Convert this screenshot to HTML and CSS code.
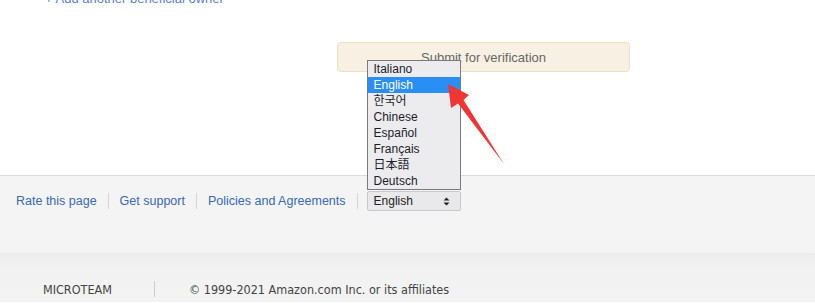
FILE: index.html
```html
<!DOCTYPE html>
<html>
  <head>
    <meta charset="utf-8">
    <title>Submit for verification</title>
    <link rel="stylesheet" href="styles.css">
  </head>
  <body>
    <main class="content">
      <a class="add-owner" href="#">+ Add another beneficial owner</a>
      <button class="submit" type="button">Submit for verification</button>
    </main>

    <footer class="footer">
      <nav class="footer-links">
        <a href="#">Rate this page</a>
        <span class="sep"></span>
        <a href="#">Get support</a>
        <span class="sep"></span>
        <a href="#">Policies and Agreements</a>
        <span class="sep"></span>
        <div class="lang">
          <div class="lang-select">
            <span>English</span>
            <svg class="updown" width="7" height="9" viewBox="0 0 7 9">
              <path d="M0.5 3.5 L3.5 0.5 L6.5 3.5 Z M0.5 5.5 L3.5 8.5 L6.5 5.5 Z" fill="#222"/>
            </svg>
          </div>
          <ul class="lang-list">
            <li>Italiano</li>
            <li class="active">English</li>
            <li>한국어</li>
            <li>Chinese</li>
            <li>Español</li>
            <li>Français</li>
            <li>日本語</li>
            <li>Deutsch</li>
          </ul>
        </div>
      </nav>
    </footer>

    <div class="legal">
      <span>MICROTEAM</span>
      <span class="sep"></span>
      <span class="copy">© 1999-2021 Amazon.com Inc. or its affiliates</span>
    </div>

    <svg class="arrow" width="815" height="303" viewBox="0 0 815 303">
      <polygon points="448,84 469,95 463.5,100 504,164 458,103.5 451,108" fill="#f03535"/>
    </svg>
  </body>
</html>
```

FILE: styles.css
```css
html, body {
  margin: 0;
  padding: 0;
}
body {
  width: 815px;
  height: 303px;
  overflow: hidden;
  position: relative;
  background: #fff;
  font-family: "Liberation Sans", Arial, sans-serif;
  color: #333;
}
.content {
  height: 175px;
  display: flex;
  flex-direction: column;
  align-items: flex-start;
}
.add-owner {
  margin: -9px 0 0 45px;
  font-size: 13px;
  line-height: 16px;
  color: #5b7fc6;
  text-decoration: none;
}
.submit {
  margin: 35px 0 0 337px;
  width: 293px;
  height: 30px;
  background: #f8f1e3;
  border: 1px solid #ebdfc7;
  border-radius: 4px;
  font-family: inherit;
  font-size: 13px;
  color: #666;
  padding: 0;
}
.footer {
  height: 77px;
  border-top: 1px solid #dcdcdc;
  background: #f4f4f4;
  box-shadow: 0 1px 2px rgba(0, 0, 0, 0.06);
}
.footer-links {
  display: flex;
  align-items: center;
  gap: 11px;
  padding: 15px 0 0 16px;
  font-size: 12.5px;
}
.footer-links a {
  color: #3868b6;
  text-decoration: none;
  margin-top: -1px;
}
.sep {
  width: 1px;
  height: 16px;
  background: #d6d6d6;
}
.lang {
  position: relative;
  margin-left: -2px;
}
.lang-select {
  width: 92px;
  height: 18px;
  box-sizing: content-box;
  border: 1px solid #c9c9c9;
  border-radius: 2px;
  background: #e9e9ec;
  display: flex;
  align-items: center;
  justify-content: space-between;
  font-size: 12px;
  color: #222;
}
.lang-select span {
  padding-left: 6px;
}
.updown {
  margin-right: 10px;
}
.lang-list {
  position: absolute;
  left: 0;
  bottom: 21px;
  width: 92px;
  margin: 0;
  padding: 0;
  list-style: none;
  border: 1px solid #7a7a7a;
  background: #ececee;
  font-family: "Liberation Sans", "Noto Sans CJK KR", "Noto Sans CJK JP", sans-serif;
  font-size: 12px;
  color: #1c1c2c;
}
.lang-list li {
  height: 16px;
  line-height: 16px;
  padding-left: 6px;
}
.lang-list .active {
  background: #2a8ff5;
  color: #fff;
}
.legal {
  height: 49px;
  background: linear-gradient(#ececec, #f2f2f2 30%, #f3f3f3);
  display: flex;
  align-items: center;
  gap: 42px;
  padding: 23px 0 0 43px;
  box-sizing: border-box;
  font-family: "DejaVu Sans Condensed", "DejaVu Sans", sans-serif;
  font-stretch: condensed;
  font-size: 12.5px;
  color: #444;
}
.legal .copy {
  margin-left: -8px;
}
.legal .sep {
  height: 16px;
  background: #ccc;
}
.arrow {
  position: absolute;
  left: 0;
  top: 0;
}
```
